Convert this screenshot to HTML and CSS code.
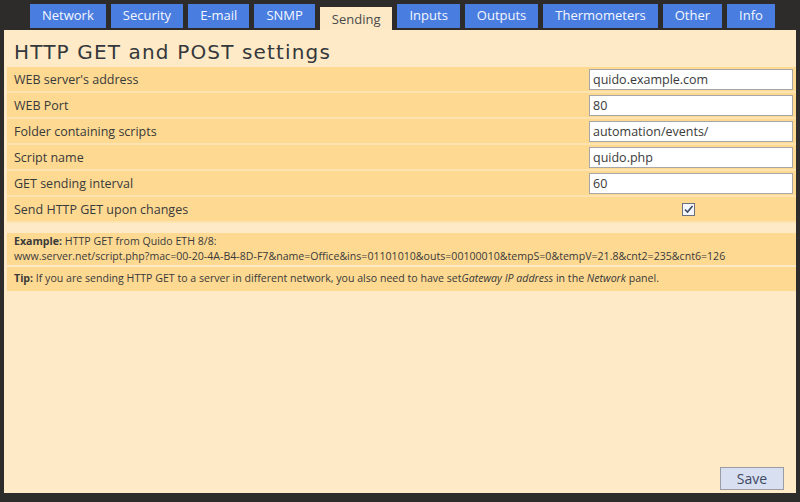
FILE: index.html
```html
<!DOCTYPE html>
<html>
<head>
<meta charset="utf-8">
<link rel="stylesheet" href="styles.css">
</head>
<body>
<div class="page">
  <nav class="tabs">
    <span class="tab">Network</span>
    <span class="tab">Security</span>
    <span class="tab">E-mail</span>
    <span class="tab">SNMP</span>
    <span class="tab active">Sending</span>
    <span class="tab">Inputs</span>
    <span class="tab">Outputs</span>
    <span class="tab">Thermometers</span>
    <span class="tab">Other</span>
    <span class="tab">Info</span>
  </nav>
  <main class="panel">
    <h1 class="title">HTTP GET and POST settings</h1>
    <div class="rows">
      <div class="row"><span class="label">WEB server's address</span><span class="field"><input class="inp" type="text" value="quido.example.com"></span></div>
      <div class="row"><span class="label">WEB Port</span><span class="field"><input class="inp" type="text" value="80"></span></div>
      <div class="row"><span class="label">Folder containing scripts</span><span class="field"><input class="inp" type="text" value="automation/events/"></span></div>
      <div class="row"><span class="label">Script name</span><span class="field"><input class="inp" type="text" value="quido.php"></span></div>
      <div class="row"><span class="label">GET sending interval</span><span class="field"><input class="inp" type="text" value="60"></span></div>
      <div class="row"><span class="label">Send HTTP GET upon changes</span><span class="field center"><span class="check"><svg width="11" height="11" viewBox="0 0 11 11"><path d="M2 5.5 L4.5 8 L9.5 2" fill="none" stroke="#3b4a66" stroke-width="1.6"/></svg></span></span></div>
    </div>
    <div class="note example"><b>Example:</b> HTTP GET from Quido ETH 8/8:<br>www.server.net/script.php?mac=00-20-4A-B4-8D-F7&amp;name=Office&amp;ins=01101010&amp;outs=00100010&amp;tempS=0&amp;tempV=21.8&amp;cnt2=235&amp;cnt6=126</div>
    <div class="note tip"><b>Tip:</b> If you are sending HTTP GET to a server in different network, you also need to have set<i>Gateway IP address</i> in the <i>Network</i> panel.</div>
    <div class="footer"><button class="save">Save</button></div>
  </main>
</div>
</body>
</html>
```
FILE: styles.css
```css
html, body {
  margin: 0;
  padding: 0;
  background: #2d2c2a;
  width: 800px;
  height: 502px;
  overflow: hidden;
}
.page {
  font-family: "Open Sans", "DejaVu Sans", sans-serif;
  color: #3a3a3a;
}
.tabs {
  display: flex;
  align-items: flex-start;
  gap: 5px;
  padding-left: 30px;
  height: 30px;
}
.tab {
  margin-top: 4px;
  height: 24px;
  line-height: 23px;
  padding: 0 12px;
  background: #4a7de0;
  color: #f4f7ff;
  font-size: 13px;
  box-sizing: border-box;
}
.tab.active {
  margin-top: 7px;
  height: 23px;
  line-height: 25px;
  background: #fde9c6;
  color: #4a4a4a;
}
.panel {
  margin: 0 4px;
  height: 463px;
  background: #feeac6;
  display: flex;
  flex-direction: column;
  box-sizing: border-box;
}
.title {
  margin: 0;
  padding: 9px 0 0 10px;
  height: 37px;
  box-sizing: border-box;
  font-family: "DejaVu Sans", sans-serif;
  font-weight: normal;
  font-size: 20px;
  letter-spacing: 1.15px;
  color: #34383c;
  line-height: 26px;
}
.rows {
  margin-left: 3px;
  display: flex;
  flex-direction: column;
}
.row {
  height: 24px;
  background: #fdd992;
  display: flex;
  align-items: center;
  justify-content: space-between;
  border-bottom: 2px solid #fde3b0;
}
.label {
  padding-left: 7px;
  font-size: 12.5px;
}
.field {
  width: 204px;
  margin-right: 3px;
  display: flex;
}
.field.center {
  justify-content: center;
}
.inp {
  width: 204px;
  height: 21px;
  box-sizing: border-box;
  border: 1px solid #a7a7a7;
  background: #fff;
  font-family: "Open Sans", "DejaVu Sans", sans-serif;
  font-size: 12.5px;
  color: #3a3a3a;
  padding: 0 3px;
  margin: 0;
}
.check {
  width: 11px;
  height: 11px;
  border: 1px solid #6a7080;
  background: #f4f6fa;
  display: block;
  margin-right: 6px;
}
.check svg { display: block; }
.note {
  margin-left: 3px;
  background: #fdd992;
  font-size: 10.6px;
  line-height: 15px;
  padding: 0 7px;
  color: #3a3a3a;
}
.example {
  margin-top: 10px;
  padding-top: 1px;
  padding-bottom: 1px;
}
.tip {
  margin-top: 2px;
  padding-top: 4px;
  padding-bottom: 5px;
}
.footer {
  margin-top: auto;
  display: flex;
  justify-content: flex-end;
  padding: 0 12px 3px 0;
}
.save {
  width: 64px;
  height: 23px;
  background: #d8dff1;
  border: 1px solid #9a9ca4;
  font-family: "Open Sans", "DejaVu Sans", sans-serif;
  font-size: 14px;
  color: #3c4863;
  padding: 0;
}
```
